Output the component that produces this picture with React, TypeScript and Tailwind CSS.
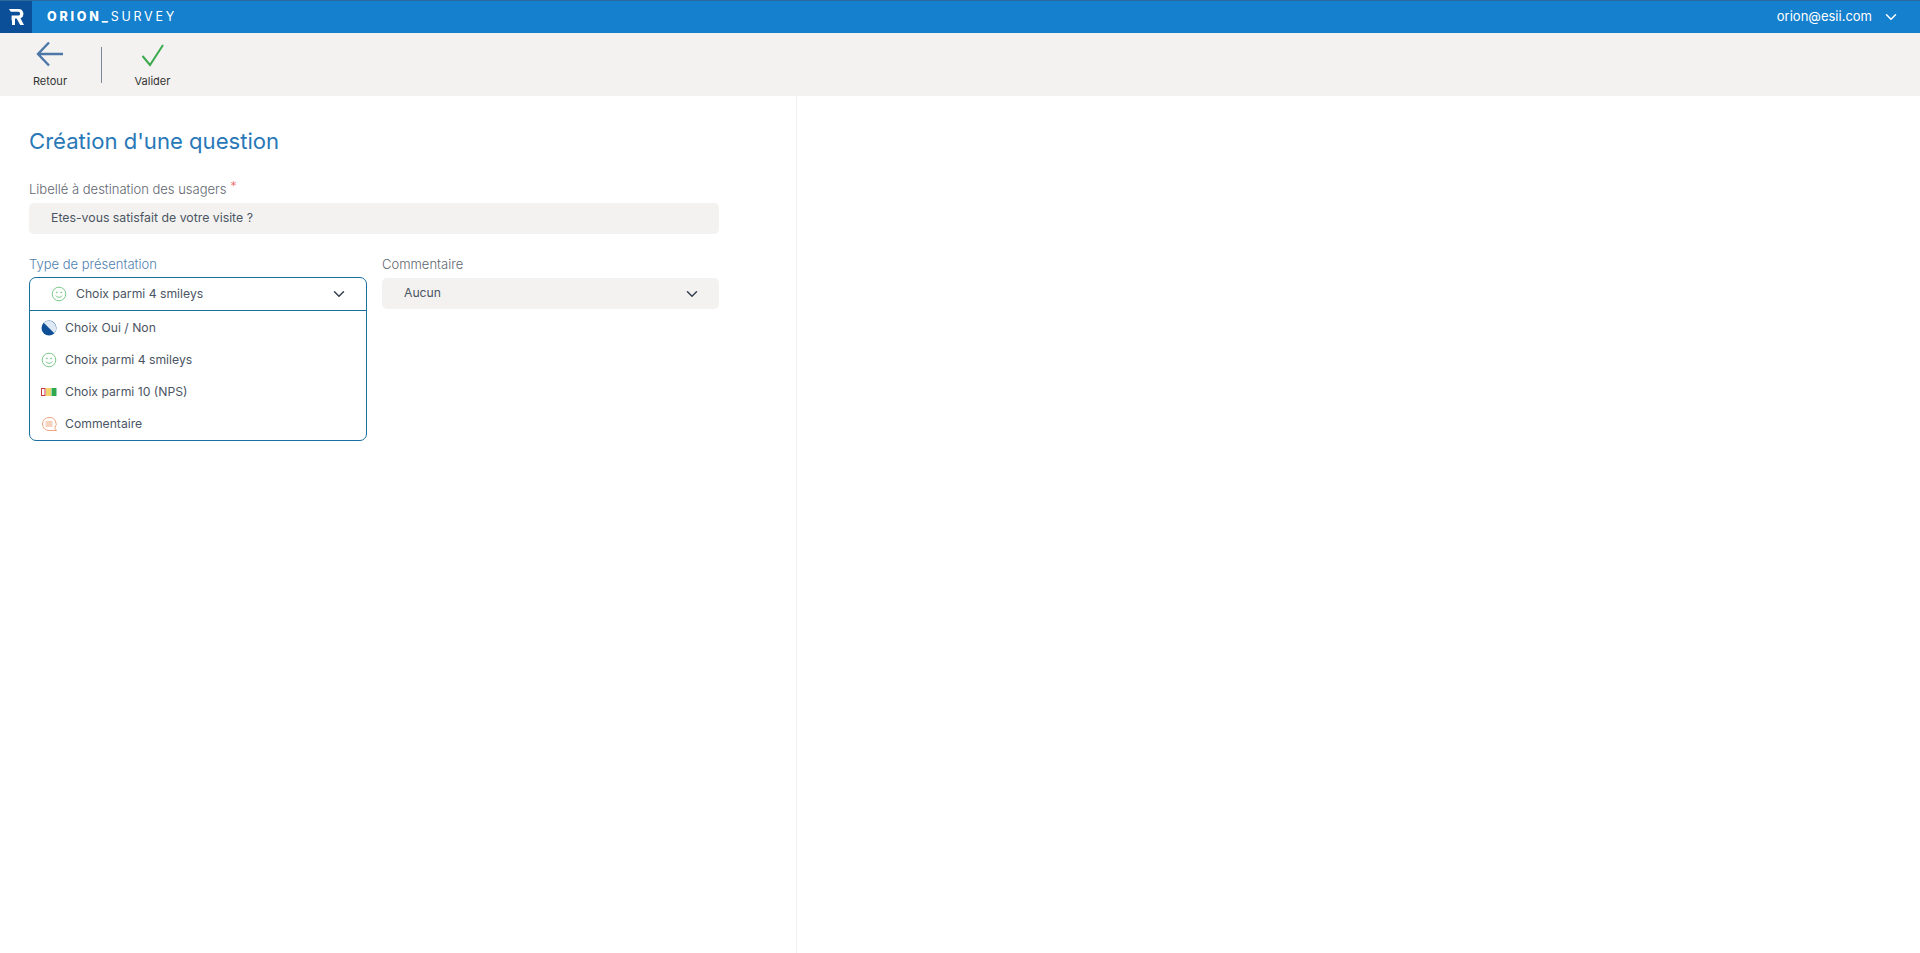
import { ChevronDown } from "lucide-react";

function Smiley({ size = 16 }: { size?: number }) {
  return (
    <svg width={size} height={size} viewBox="0 0 16 16" fill="none" stroke="#7cc98a" strokeWidth="1">
      <circle cx="8" cy="8" r="6.8" />
      <circle cx="5.8" cy="6.4" r="0.5" />
      <circle cx="10.2" cy="6.4" r="0.5" />
      <path d="M4.8 9.6c1.4 2.2 5 2.2 6.4 0" />
    </svg>
  );
}

function YesNoIcon() {
  return (
    <svg width="16" height="16" viewBox="0 0 16 16">
      <circle cx="8" cy="8" r="7.5" fill="#0f4f96" />
      <path d="M2.7 2.7 L13.3 13.3 A7.5 7.5 0 0 0 2.7 2.7 Z" fill="#dfe9f3" />
    </svg>
  );
}

function NpsIcon() {
  return (
    <svg width="16" height="8" viewBox="0 0 16 8">
      <rect x="0.5" y="0.5" width="3.5" height="7" fill="#fff" stroke="#c8393c" />
      <rect x="5" y="0" width="5" height="8" fill="#f1d36b" />
      <rect x="10.5" y="0" width="5" height="8" fill="#2fa84f" />
    </svg>
  );
}

function CommentIcon() {
  return (
    <svg width="17" height="17" viewBox="0 0 17 17" fill="none" stroke="#f0a57f" strokeWidth="1">
      <path d="M8 1.5a6.5 6.5 0 1 0 0 13h7.5l-1.8-2.4A6.5 6.5 0 0 0 8 1.5Z" />
      <path d="M4.5 6h7M4.5 8h7M4.5 10h7" />
    </svg>
  );
}

function Option({ icon, label }: { icon: React.ReactNode; label: string }) {
  return (
    <div className="flex items-center h-[32px] pl-[11px] text-[12.2px] text-[#4b5563]">
      <span className="w-[24px] flex items-center">{icon}</span>
      {label}
    </div>
  );
}

export default function App() {
  return (
    <div className="h-[953px] flex flex-col bg-white overflow-hidden font-['Inter',sans-serif]">
      {/* Top bar */}
      <header className="h-[33px] flex items-center justify-between bg-[#1580cd] border-t border-[#2a6a9c]">
        <div className="flex items-center h-full">
          <div className="w-[32px] h-full bg-[#0a4f97] flex items-center justify-center">
            <svg width="15" height="16" viewBox="0 0 15 16" fill="#fff">
              <path d="M0 0h9.5a4.8 4.8 0 0 1 2 9.2L15 16h-3.8L7.6 9.4H4.2L2.6 11.8V6.6h6.6a1.9 1.9 0 0 0 0-3.8H1.8Z" />
              <path d="M3 10.5 6 8v8H3Z" />
            </svg>
          </div>
          <div className="ml-[15px] text-[12.5px] text-white tracking-[0.22em]">
            <span className="font-extrabold">ORION_</span>
            <span>SURVEY</span>
          </div>
        </div>
        <div className="flex items-center text-[13px] text-white">
          orion@esii.com
          <ChevronDown size={18} strokeWidth={2} className="ml-[10px] mr-[20px]" />
        </div>
      </header>

      {/* Toolbar */}
      <div className="h-[63px] flex items-center bg-[#f3f2f0]">
        <div className="w-[100px] flex flex-col items-center pt-[2px]">
          <svg width="28" height="26" viewBox="0 0 28 26" fill="none" stroke="#4c77a8" strokeWidth="2.4">
            <path d="M13 1.5 2 13l11 11.5M2.5 13H27" />
          </svg>
          <span className="mt-[6px] text-[11px] text-[#333]">Retour</span>
        </div>
        <div className="w-px h-[36px] bg-[#7b8a99] ml-[1px]" />
        <div className="w-[101px] flex flex-col items-center pt-[2px]">
          <svg width="24" height="26" viewBox="0 0 24 26" fill="none" stroke="#3aaa4d" strokeWidth="2">
            <path d="M1.5 15l7.5 9L22 4" />
          </svg>
          <span className="mt-[6px] text-[11px] text-[#333]">Valider</span>
        </div>
      </div>

      {/* Content */}
      <main className="flex flex-1">
        <section className="w-[797px] border-r border-[#f0f0f0] pl-[29px] pt-[30px]">
          <h1 className="text-[22.1px] leading-[30px] text-[#2878b8]">Création d'une question</h1>

          <div className="mt-[24px] w-[690px]">
            <label className="block h-[18px] text-[13px] font-light leading-[18px] text-[#5f6670]">
              Libellé à destination des usagers <span className="relative -top-[3px] text-[#ef6a6a]">*</span>
            </label>
            <div className="mt-[5px] h-[31px] flex items-center pl-[22px] rounded-[5px] bg-[#f3f2f0] text-[12.3px] text-[#4b5563]">
              Etes-vous satisfait de votre visite ?
            </div>
          </div>

          <div className="mt-[21px] flex w-[690px] gap-[15px] items-start">
            <div className="w-[338px]">
              <label className="block h-[18px] text-[13px] font-light leading-[18px] text-[#4f7fb0]">Type de présentation</label>
              <div className="mt-[4px] border border-[#1a6f9f] rounded-[7px]">
                <div className="h-[33px] flex items-center justify-between border-b border-[#1a6f9f] pl-[21px] pr-[18px]">
                  <div className="flex items-center text-[12.2px] text-[#4b5563]">
                    <Smiley />
                    <span className="ml-[9px]">Choix parmi 4 smileys</span>
                  </div>
                  <ChevronDown size={18} strokeWidth={2} className="text-[#374151]" />
                </div>
                <div className="pt-[1px]">
                  <Option icon={<YesNoIcon />} label="Choix Oui / Non" />
                  <Option icon={<Smiley />} label="Choix parmi 4 smileys" />
                  <Option icon={<NpsIcon />} label="Choix parmi 10 (NPS)" />
                  <Option icon={<CommentIcon />} label="Commentaire" />
                </div>
              </div>
            </div>
            <div className="flex-1">
              <label className="block h-[18px] text-[13px] font-light leading-[18px] text-[#5f6670]">Commentaire</label>
              <div className="mt-[5px] h-[31px] flex items-center justify-between rounded-[5px] bg-[#f3f2f0] pl-[22px] pr-[18px] text-[12.2px] text-[#4b5563]">
                Aucun
                <ChevronDown size={18} strokeWidth={2} className="text-[#374151]" />
              </div>
            </div>
          </div>
        </section>
        <section className="flex-1" />
      </main>
    </div>
  );
}
